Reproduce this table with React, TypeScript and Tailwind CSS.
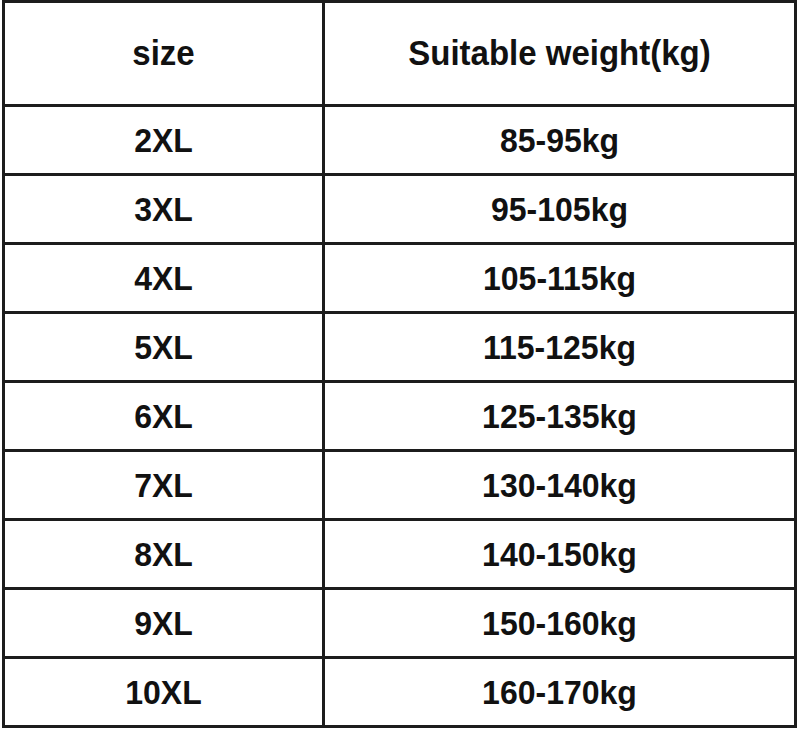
const rows: [string, string][] = [
  ["2XL", "85-95kg"],
  ["3XL", "95-105kg"],
  ["4XL", "105-115kg"],
  ["5XL", "115-125kg"],
  ["6XL", "125-135kg"],
  ["7XL", "130-140kg"],
  ["8XL", "140-150kg"],
  ["9XL", "150-160kg"],
  ["10XL", "160-170kg"],
];

function Cell({ text, left, head }: { text: string; left?: boolean; head?: boolean }) {
  return (
    <div
      className={
        left
          ? "w-[320px] h-full flex items-center justify-center border-r-[3px] border-[#1c1c1c]"
          : "flex-1 h-full flex items-center justify-center"
      }
    >
      <span
        className={
          head
            ? "inline-block scale-y-105 text-[33px] leading-none font-bold text-[#111] -mt-[3px]"
            : "inline-block scale-y-105 text-[32px] leading-none font-bold text-[#111]"
        }
      >
        {text}
      </span>
    </div>
  );
}

export default function App() {
  return (
    <div className="w-[800px] h-[729px] bg-white" style={{ fontFamily: '"Liberation Sans", Arial, sans-serif' }}>
      <div className="ml-[2px] w-[795px] h-[728px] border-[3px] border-[#1c1c1c] flex flex-col">
        <div className="h-[104px] flex border-b-[3px] border-[#1c1c1c]">
          <Cell text="size" left head />
          <Cell text="Suitable weight(kg)" head />
        </div>
        {rows.map(([s, w], i) => (
          <div
            key={s}
            className={
              i < rows.length - 1
                ? "h-[69px] flex border-b-[3px] border-[#1c1c1c]"
                : "h-[66px] flex"
            }
          >
            <Cell text={s} left />
            <Cell text={w} />
          </div>
        ))}
      </div>
    </div>
  );
}
